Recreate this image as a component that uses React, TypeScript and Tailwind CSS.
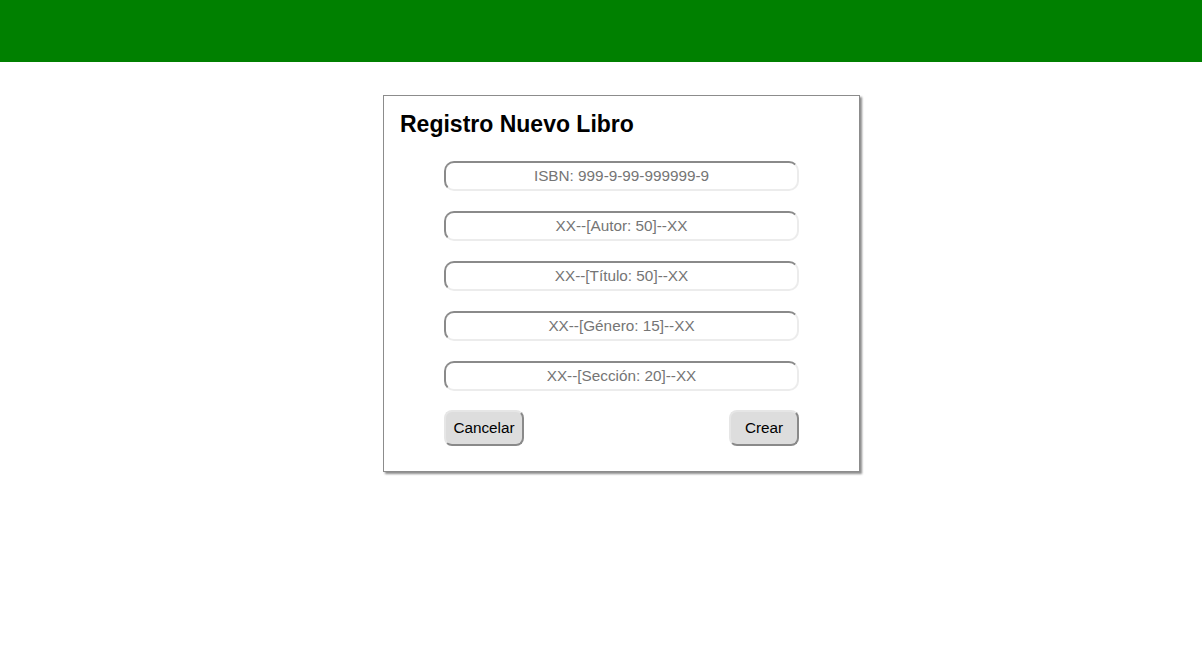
export default function App() {
  const fields = [
    "ISBN: 999-9-99-999999-9",
    "XX--[Autor: 50]--XX",
    "XX--[Título: 50]--XX",
    "XX--[Género: 15]--XX",
    "XX--[Sección: 20]--XX",
  ];
  return (
    <div className="min-h-[672px] bg-white" style={{ fontFamily: '"Liberation Sans", Arial, sans-serif' }}>
      <div className="h-[62px] bg-[#008000]" />
      <div className="pl-[383px] pt-[33px]">
        <div className="w-[477px] h-[377px] border border-[#8c8c8c] bg-white shadow-[2px_2px_2px_rgba(0,0,0,0.45)] flex flex-col">
          <h2 className="pl-4 pt-[15px] text-[23px] leading-[27px] font-bold text-black">Registro Nuevo Libro</h2>
          <div className="flex flex-col gap-5 mt-[23px] pl-[60px]">
            {fields.map((f) => (
              <input
                key={f}
                placeholder={f}
                className="w-[355px] h-[30px] rounded-[10px] border-2 border-t-[#8a8a8a] border-l-[#8a8a8a] border-b-[#ececec] border-r-[#ececec] bg-white text-center text-[15.3px] text-black placeholder:text-[#757575] outline-none"
              />
            ))}
          </div>
          <div className="flex justify-between w-[355px] ml-[60px] mt-[19px]">
            <button className="w-[80px] h-[36px] rounded-[8px] border-2 border-t-[#e6e6e6] border-l-[#e6e6e6] border-b-[#8a8a8a] border-r-[#8a8a8a] bg-[#dddddd] text-[15.3px] text-black">
              Cancelar
            </button>
            <button className="w-[70px] h-[36px] rounded-[8px] border-2 border-t-[#e6e6e6] border-l-[#e6e6e6] border-b-[#8a8a8a] border-r-[#8a8a8a] bg-[#dddddd] text-[15.3px] text-black">
              Crear
            </button>
          </div>
        </div>
      </div>
    </div>
  );
}
